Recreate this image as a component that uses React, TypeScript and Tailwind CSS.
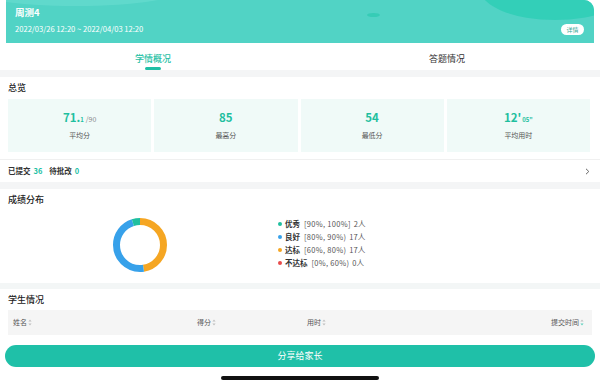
import React from "react";

function SortIcon({ active = false }: { active?: boolean }) {
  return (
    <svg width="4" height="7" viewBox="0 0 4 7" className="ml-[1px]">
      <path d="M2 0.5 L3.6 2.6 L0.4 2.6 Z" fill="#bfbfbf" />
      <path d="M2 6.5 L3.6 4.4 L0.4 4.4 Z" fill={active ? "#5fd0bd" : "#bfbfbf"} />
    </svg>
  );
}

function Donut() {
  const r = 23.5;
  const C = 2 * Math.PI * r;
  const segs = [
    { start: 0, end: 170, color: "#f5a623" },
    { start: 170, end: 340, color: "#37a1ea" },
    { start: 340, end: 360, color: "#1fbf9f" },
  ];
  return (
    <svg width="54" height="54" viewBox="0 0 54 54">
      <g transform="rotate(-90 27 27)">
        {segs.map((s, i) => {
          const len = ((s.end - s.start) / 360) * C;
          const off = (s.start / 360) * C;
          return (
            <circle
              key={i}
              cx="27"
              cy="27"
              r={r}
              fill="none"
              stroke={s.color}
              strokeWidth="7"
              strokeDasharray={`${len} ${C}`}
              strokeDashoffset={-off}
            />
          );
        })}
      </g>
    </svg>
  );
}

function Legend({ color, name, range, count }: { color: string; name: string; range: string; count: string }) {
  return (
    <div className="flex items-center h-[13px] text-[7.5px] leading-[13px]">
      <span className="w-[4px] h-[4px] rounded-full mr-[3px]" style={{ backgroundColor: color }} />
      <span className="font-bold text-[#333]">{name}</span>
      <span className="text-[#555] ml-[4px] tracking-[0.3px]">{range}</span>
      <span className="text-[#555] ml-[3px]">{count}</span>
    </div>
  );
}

function StatCard({ value, label }: { value: React.ReactNode; label: string }) {
  return (
    <div className="bg-[#f0faf8] h-[53px] flex flex-col items-center">
      <div className="mt-[11px] h-[14px] flex items-baseline text-[#1fbf9f] font-bold text-[11.5px] leading-[14px]">{value}</div>
      <div className="mt-[6px] text-[7px] leading-[10px] text-[#555]">{label}</div>
    </div>
  );
}

export default function App() {
  return (
    <div className="w-[600px] h-[382px] bg-white overflow-hidden flex flex-col font-['Noto_Sans_CJK_SC','Noto_Sans',sans-serif] text-[#333]">
      {/* Header */}
      <div className="mx-[6px] h-[43px] shrink-0 relative overflow-hidden rounded-tr-[10px] bg-[#51d3c5] pl-[9px] pr-[10px]">
        <div className="absolute left-[-40px] top-[-30px] w-[220px] h-[36px] rounded-[50%] bg-[#60d9cc]" />
        <div className="absolute left-[474px] top-[-42px] w-[150px] h-[62px] rounded-[50%] bg-[#33cfb8]" />
        <div className="absolute left-[361px] top-[13px] w-[13px] h-[4px] rounded-[50%] bg-[#36ccb6]" />
        <div className="relative mt-[5px] h-[14px] text-[9.5px] font-bold text-white leading-[14px]">周测4</div>
        <div className="relative mt-[4px] h-[12px] flex items-center justify-between">
          <span className="text-[7.6px] text-white leading-[12px]">2022/03/26 12:20 ~ 2022/04/03 12:20</span>
          <span className="h-[11px] w-[23px] rounded-full bg-white text-[6px] text-[#3aa796] flex items-center justify-center">详情</span>
        </div>
      </div>

      {/* Tabs */}
      <div className="mx-[6px] h-[27px] shrink-0 flex bg-white">
        <div className="flex-1 flex flex-col items-center pt-[10px]">
          <span className="text-[9px] leading-[12px] text-[#1fbfa5] font-medium">学情概况</span>
          <span className="mt-[2px] h-[2.5px] w-[16px] rounded-full bg-[#1fbfa5]" />
        </div>
        <div className="flex-1 flex flex-col items-center pt-[10px]">
          <span className="text-[9px] leading-[12px] text-[#333]">答题情况</span>
        </div>
      </div>

      <div className="h-[7px] shrink-0 bg-[#f4f5f6]" />

      {/* Overview */}
      <div className="shrink-0">
        <div className="h-[22px] px-[8px] flex items-center text-[9px] font-medium text-[#222]">总览</div>
        <div className="grid grid-cols-4 gap-[3px] pl-[8px] pr-[10px]">
          <StatCard
            value={
              <>
                <span>71.</span>
                <span className="text-[6px]">1</span>
                <span className="text-[7px] font-normal text-[#888] ml-[2px]">/90</span>
              </>
            }
            label="平均分"
          />
          <StatCard value={<span>85</span>} label="最高分" />
          <StatCard value={<span>54</span>} label="最低分" />
          <StatCard
            value={
              <>
                <span>12'</span>
                <span className="text-[6px] ml-[1px]">05"</span>
              </>
            }
            label="平均用时"
          />
        </div>
        <div className="mt-[7px] border-t border-[#f0f0f0] h-[23px] px-[8px] flex items-center text-[7.5px]">
          <span className="font-bold text-[#333]">已提交</span>
          <span className="font-bold text-[#1fbfa5] ml-[3px]">36</span>
          <span className="font-bold text-[#333] ml-[7px]">待批改</span>
          <span className="font-bold text-[#1fbfa5] ml-[3px]">0</span>
          <svg className="ml-auto mr-[2px]" width="5" height="7" viewBox="0 0 5 7">
            <path d="M1 0.8 L3.8 3.5 L1 6.2" fill="none" stroke="#666" strokeWidth="1" />
          </svg>
        </div>
      </div>

      <div className="h-[7px] shrink-0 bg-[#f4f5f6]" />

      {/* Distribution */}
      <div className="shrink-0 h-[94px]">
        <div className="h-[22px] px-[8px] flex items-center text-[9px] font-medium text-[#222]">成绩分布</div>
        <div className="flex pl-[113px]">
          <div className="mt-[7px]">
            <Donut />
          </div>
          <div className="mt-[6px] ml-[111px] flex flex-col">
            <Legend color="#1fbf9f" name="优秀" range="[90%, 100%]" count="2人" />
            <Legend color="#37a1ea" name="良好" range="[80%, 90%)" count="17人" />
            <Legend color="#f5a623" name="达标" range="[60%, 80%)" count="17人" />
            <Legend color="#e84b4b" name="不达标" range="[0%, 60%)" count="0人" />
          </div>
        </div>
      </div>

      <div className="h-[6px] shrink-0 bg-[#f3f6f6]" />

      {/* Students */}
      <div className="shrink-0">
        <div className="h-[21px] px-[8px] flex items-center text-[9px] font-medium text-[#222]">学生情况</div>
        <div className="mx-[8px] h-[25px] bg-[#f5f5f5] flex items-center text-[7px] text-[#555] relative">
          <span className="absolute left-[5px] flex items-center">姓名<SortIcon /></span>
          <span className="absolute left-[189px] flex items-center">得分<SortIcon /></span>
          <span className="absolute left-[299px] flex items-center">用时<SortIcon /></span>
          <span className="absolute right-[8px] flex items-center">提交时间<SortIcon active /></span>
        </div>
      </div>

      {/* Button */}
      <div className="mt-[10px] mx-[5px] h-[22px] shrink-0 rounded-full bg-[#1fc0a8] flex items-center justify-center text-white text-[9px]">
        分享给家长
      </div>

      <div className="mt-[9px] flex justify-center">
        <div className="w-[158px] h-[4px] rounded-full bg-[#111]" />
      </div>
    </div>
  );
}
